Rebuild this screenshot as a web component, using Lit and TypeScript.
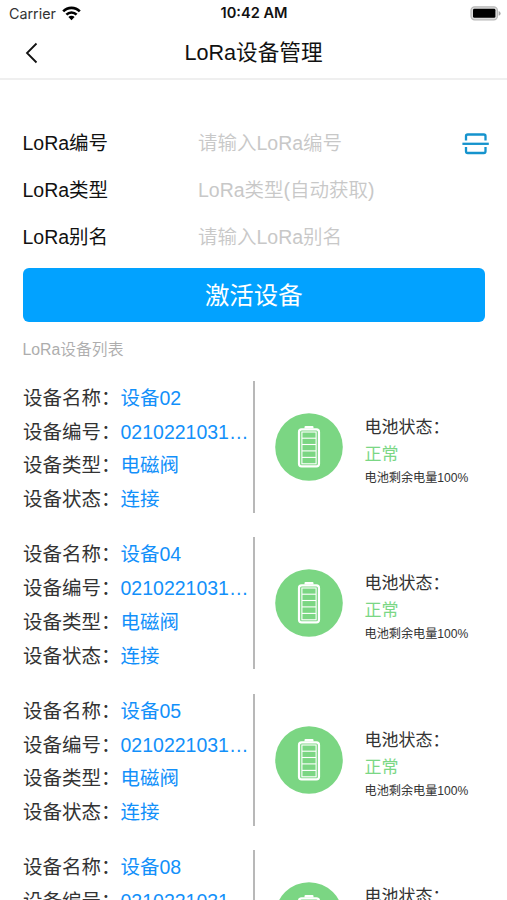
import { LitElement, html, css, svg } from "lit";
import { customElement, property } from "lit/decorators.js";

interface Device {
  name: string;
  code: string;
  type: string;
  status: string;
  battery: number;
}

const devices: Device[] = ["02", "04", "05", "08"].map((n) => ({
  name: `设备${n}`,
  code: "0210221031…",
  type: "电磁阀",
  status: "连接",
  battery: 100,
}));

@customElement("status-bar")
class StatusBar extends LitElement {
  static styles = css`
    :host {
      display: grid;
      grid-template-columns: 1fr auto 1fr;
      align-items: center;
      height: 27px;
      padding: 0 6px 0 9px;
      color: #111;
    }
    .carrier {
      display: flex;
      align-items: center;
      gap: 6px;
      font: 14.3px/27px Inter, sans-serif;
      color: #333;
    }
    .time {
      font: 600 14.6px/27px Inter, sans-serif;
      margin-right: 2px;
    }
    .battery {
      justify-self: end;
    }
    svg {
      display: block;
    }
  `;
  render() {
    return html`
      <div class="carrier">
        <span>Carrier</span>
        <svg width="19" height="15" viewBox="0 0 19 15">
          <g fill="none" stroke="#000" stroke-width="2.6">
            <path d="M1.2 5.4a11.6 11.6 0 0 1 16.6 0" />
            <path d="M4.4 8.7a7.1 7.1 0 0 1 10.2 0" />
          </g>
          <path d="M6.4 11a4.4 4.4 0 0 1 6.2 0L9.5 14.2z" />
        </svg>
      </div>
      <div class="time">10:42 AM</div>
      <svg class="battery" width="31" height="15" viewBox="0 0 31 15">
        <rect x="1" y="0.8" width="26.4" height="13" rx="3.6" fill="#ddd" stroke="#b8b8b8" stroke-width="1.2" />
        <rect x="3" y="2.8" width="22.4" height="9" rx="1.4" />
        <path d="M28.6 5v4.8q2-0.8 2-2.4t-2-2.4z" fill="#a5a5a5" />
      </svg>
    `;
  }
}

@customElement("form-row")
class FormRow extends LitElement {
  @property() label = "";
  @property() hint = "";
  static styles = css`
    :host {
      display: flex;
      align-items: center;
      height: 47.2px;
      font-size: 19.5px;
    }
    .label {
      width: 175.5px;
      color: #111;
    }
    .hint {
      flex: 1;
      color: #c8c8c8;
      font-weight: 350;
    }
  `;
  render() {
    return html`<span class="label">${this.label}</span><span class="hint">${this.hint}</span><slot></slot>`;
  }
}

@customElement("device-card")
class DeviceCard extends LitElement {
  @property({ attribute: false }) device!: Device;
  static styles = css`
    :host {
      display: flex;
      height: 132px;
      margin-bottom: 24.5px;
    }
    .info {
      width: 230px;
      border-right: 2px solid #b8b8b8;
    }
    .line {
      display: flex;
      height: 33.75px;
      line-height: 35.5px;
      font-size: 19.5px;
      color: #333;
    }
    .key {
      flex: none;
      width: 97.5px;
    }
    .value {
      white-space: nowrap;
      color: #1290fa;
    }
    .power {
      display: flex;
      align-items: center;
      padding-left: 19.5px;
    }
    .disc {
      display: block;
      margin-right: 22px;
    }
    .text {
      display: flex;
      flex-direction: column;
      padding-top: 8px;
      color: #333;
    }
    .title,
    .state {
      font-size: 17px;
      line-height: 27px;
    }
    .state {
      color: #7bd785;
    }
    .rest {
      font-size: 12.15px;
      line-height: 20px;
    }
  `;
  render() {
    const d = this.device;
    const lines = [
      ["设备名称：", d.name],
      ["设备编号：", d.code],
      ["设备类型：", d.type],
      ["设备状态：", d.status],
    ];
    return html`
      <div class="info">
        ${lines.map(
          ([k, v]) => html`<div class="line"><span class="key">${k}</span><span class="value">${v}</span></div>`
        )}
      </div>
      <div class="power">
        <svg class="disc" width="68" height="68" viewBox="0 0 68 68">
          <circle cx="34" cy="34" r="33.8" fill="#7bd683" />
          <path d="M29.5 15.5v-1.6q0-1 1-1h7q1 0 1 1v1.6z" fill="#fff" />
          <rect x="24" y="16.4" width="20" height="37" rx="2.6" fill="none" stroke="#fff" stroke-width="2.2" />
          <rect x="26.9" y="19" width="14.2" height="31.8" fill="none" stroke="#fff" stroke-width="1.1" />
          ${[25.2, 31.5, 37.9, 44.4].map(
            (y) => svg`<path d="M27 ${y}h14" stroke="#fff" stroke-width="1.1" />`
          )}
        </svg>
        <div class="text">
          <span class="title">电池状态：</span>
          <span class="state">正常</span>
          <span class="rest">电池剩余电量${d.battery}%</span>
        </div>
      </div>
    `;
  }
}

@customElement("app-root")
class AppRoot extends LitElement {
  static styles = css`
    :host {
      display: block;
      height: 900px;
      overflow: hidden;
      background: #fff;
      font-family: "Liberation Sans", "Noto Sans CJK SC", sans-serif;
    }
    .nav {
      display: grid;
      grid-template-columns: 60px 1fr 60px;
      align-items: center;
      height: 51px;
      border-bottom: 2px solid #efefef;
    }
    .back {
      display: block;
      margin-left: 24px;
    }
    .heading {
      text-align: center;
      font-size: 21.6px;
      color: #111;
      padding-bottom: 4px;
    }
    .form {
      padding: 38px 18px 0 22.5px;
    }
    .scan {
      margin-top: 4px;
    }
    .submit {
      display: flex;
      align-items: center;
      justify-content: center;
      height: 51px;
      padding-bottom: 3px;
      margin: 8px 22px 0 22.5px;
      border-radius: 6px;
      background: #02a2ff;
      color: #fff;
      font-size: 24.4px;
    }
    .caption {
      margin: 14px 0 0 22.5px;
      height: 27px;
      line-height: 27px;
      font-size: 15.8px;
      color: #adadad;
      font-weight: 350;
    }
    .list {
      padding: 18.4px 0 0 23px;
    }
  `;
  render() {
    return html`
      <status-bar></status-bar>
      <div class="nav">
        <svg class="back" width="16" height="22" viewBox="0 0 16 22">
          <path d="M12.5 1.5L3 11l9.5 9.5" fill="none" stroke="#111" stroke-width="1.8" />
        </svg>
        <span class="heading">LoRa设备管理</span>
      </div>
      <div class="form">
        <form-row label="LoRa编号" hint="请输入LoRa编号">
          <svg class="scan" width="27" height="22" viewBox="0 0 27 22" fill="none" stroke="#1593cd" stroke-width="2.3">
            <path d="M4 7.5V3.2Q4 1.5 5.7 1.5h16.1q1.7 0 1.7 1.7v4.3M4 14v4.3Q4 20 5.7 20h16.1q1.7 0 1.7-1.7V14" />
            <path d="M0.4 10.8h26.4" />
          </svg>
        </form-row>
        <form-row label="LoRa类型" hint="LoRa类型(自动获取)"></form-row>
        <form-row label="LoRa别名" hint="请输入LoRa别名"></form-row>
      </div>
      <div class="submit">激活设备</div>
      <div class="caption">LoRa设备列表</div>
      <div class="list">
        ${devices.map((d) => html`<device-card .device=${d}></device-card>`)}
      </div>
    `;
  }
}
